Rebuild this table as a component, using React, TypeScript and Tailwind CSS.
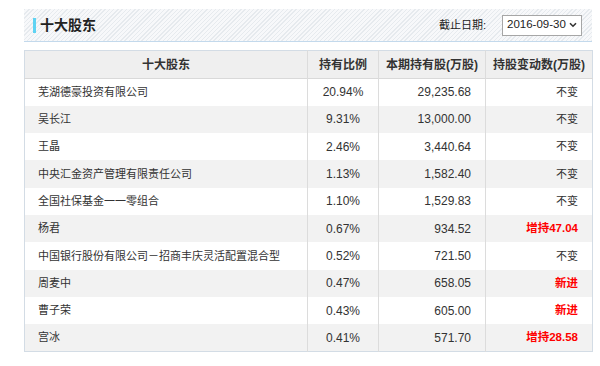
import React from "react";

type Row = { name: string; pct: string; shares: string; change: string; red?: boolean };

const rows: Row[] = [
  { name: "芜湖德豪投资有限公司", pct: "20.94%", shares: "29,235.68", change: "不变" },
  { name: "吴长江", pct: "9.31%", shares: "13,000.00", change: "不变" },
  { name: "王晶", pct: "2.46%", shares: "3,440.64", change: "不变" },
  { name: "中央汇金资产管理有限责任公司", pct: "1.13%", shares: "1,582.40", change: "不变" },
  { name: "全国社保基金一一零组合", pct: "1.10%", shares: "1,529.83", change: "不变" },
  { name: "杨君", pct: "0.67%", shares: "934.52", change: "增持47.04", red: true },
  { name: "中国银行股份有限公司－招商丰庆灵活配置混合型", pct: "0.52%", shares: "721.50", change: "不变" },
  { name: "周麦中", pct: "0.47%", shares: "658.05", change: "新进", red: true },
  { name: "曹子荣", pct: "0.43%", shares: "605.00", change: "新进", red: true },
  { name: "宫冰", pct: "0.41%", shares: "571.70", change: "增持28.58", red: true },
];

export default function App() {
  return (
    <div
      className="w-[600px] h-[366px] bg-white text-[#333]"
      style={{ fontFamily: '"Liberation Sans", "Noto Sans CJK SC", sans-serif' }}
    >
      <div className="pl-[24px] pt-[9px] w-[592px]">
        <div className="h-[33px] flex items-center justify-between border-b border-[#c3d9ec] bg-[repeating-linear-gradient(-45deg,#e6eaee_0px,#e6eaee_1px,#f7f8fa_1px,#f7f8fa_3px)] pl-[9px] pr-[10px]">
          <div className="flex items-center">
            <span className="w-[3px] h-[15px] bg-[#5fd3f3] mr-[4px]" />
            <span className="text-[14px] font-bold text-[#222] leading-none">十大股东</span>
          </div>
          <div className="flex items-center">
            <span className="text-[11px] text-[#222] mr-[16px] whitespace-nowrap">截止日期:</span>
            <div className="w-[80px] h-[21px] border border-[#a6a6a6] bg-white flex items-center justify-between pl-[4px] pr-[4px] whitespace-nowrap">
              <span className="text-[11.5px] text-[#222] leading-none">2016-09-30</span>
              <svg width="8" height="6" viewBox="0 0 8 6" className="shrink-0">
                <path d="M1 1.2 L4 4.2 L7 1.2" fill="none" stroke="#333" strokeWidth="1.6" />
              </svg>
            </div>
          </div>
        </div>

        <table className="mt-[8px] w-[568px] border-collapse border border-[#d3dce5] table-fixed">
          <colgroup>
            <col className="w-[283px]" />
            <col className="w-[71px]" />
            <col className="w-[107px]" />
            <col className="w-[107px]" />
          </colgroup>
          <thead>
            <tr className="h-[28px] bg-[#efefef] border-b border-[#d9d9d9]">
              <th className="text-[12px] font-bold text-[#333] text-center border-r border-[#dcdcdc]">十大股东</th>
              <th className="text-[12px] font-bold text-[#333] text-center border-r border-[#dcdcdc]">持有比例</th>
              <th className="text-[12px] font-bold text-[#333] text-center border-r border-[#dcdcdc]">本期持有股(万股)</th>
              <th className="text-[12px] font-bold text-[#333] text-center">持股变动数(万股)</th>
            </tr>
          </thead>
          <tbody>
            {rows.map((r, i) => (
              <tr key={i} className={`h-[27.3px] ${i % 2 === 1 ? "bg-[#f2f2f2]" : "bg-white"}`}>
                <td className="text-[11px] pl-[13px] border-r border-[#dcdcdc] whitespace-nowrap">{r.name}</td>
                <td className="text-[12px] text-center border-r border-[#dcdcdc]">{r.pct}</td>
                <td className="text-[12px] text-right pr-[14px] border-r border-[#dcdcdc]">{r.shares}</td>
                <td
                  className={`text-right pr-[14px] whitespace-nowrap ${r.red ? "text-[#ff0000] font-bold text-[11.5px]" : "text-[#333] text-[11px]"}`}
                >
                  {r.change}
                </td>
              </tr>
            ))}
          </tbody>
        </table>
      </div>
    </div>
  );
}
